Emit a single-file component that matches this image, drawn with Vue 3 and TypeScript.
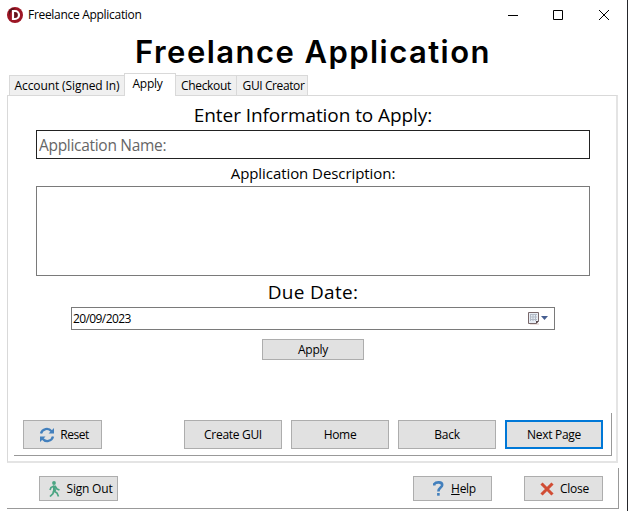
<script setup lang="ts">
import { ref } from 'vue'

const tabs = [
  { id: 'account', label: 'Account (Signed In)' },
  { id: 'apply', label: 'Apply' },
  { id: 'checkout', label: 'Checkout' },
  { id: 'creator', label: 'GUI Creator' },
]
const active = ref('apply')
const pages = ['Create GUI', 'Home', 'Back', 'Next Page']
const dueDate = ref('20/09/2023')
</script>

<template>
  <main class="window">
    <header class="titlebar">
      <svg class="logo" viewBox="0 0 16 16">
        <circle cx="8" cy="8" r="8" fill="#9c1524" />
        <path d="M2 4A7 7 0 0 1 8 1L6 3C4 4 2 7 2 10Z" fill="#50151b" />
        <path d="M6 4H8A4 4 0 0 1 8 12H6Z" fill="#65131c" stroke="#fff" stroke-width="2.200" />
      </svg>
      <span class="caption">Freelance Application</span>
      <svg class="controls" viewBox="0 0 102 12" fill="none" stroke="#000">
        <path d="M0 6.500H10M45.500 1.500H54.500V10.500H45.500Z" />
        <path d="M91 1L101 11M101 1L91 11" />
      </svg>
    </header>
    <h1>Freelance Application</h1>
    <nav class="tabs">
      <button v-for="t in tabs" :key="t.id" class="tab" :class="[t.id, { selected: active === t.id }]" @click="active = t.id">
        <span>{{ t.label }}</span>
      </button>
    </nav>
    <section class="panel">
      <h2>Enter Information to Apply:</h2>
      <input class="name" placeholder="Application Name:" />
      <h3>Application Description:</h3>
      <textarea class="description"></textarea>
      <h2 class="due">Due Date:</h2>
      <div class="date">
        <span>{{ dueDate }}</span>
        <svg viewBox="0 0 21 14">
          <rect x="2" y="11" width="9" height="2" fill="#eadfdc" />
          <path d="M.5.500H10.500V9L8 11.500H.5Z" fill="#e8edf4" stroke="#79686a" />
          <path d="M2 2.500H9M2 5H9M2 7.500H9M2.500 2V9M5 2V9M7.500 2V9" stroke="#b3bbc7" fill="none" />
          <path d="M8 12V9H11Z" fill="#59494c" />
          <path d="M13 4H20L16.500 8Z" fill="#465f91" />
        </svg>
      </div>
      <button class="btn apply">Apply</button>
      <div class="actions">
        <button class="btn reset">
          <svg viewBox="0 0 16 16" fill="none" stroke="#4380bd" stroke-width="2.300">
            <path d="M2 6.500C3.200 1.500 9.500.5 12.500 4.200M14 9.500C12.800 14.500 6.500 15.500 3.500 11.800" />
            <path d="M15 1V6.500H9.500ZM1 15V9.500H6.500Z" fill="#4380bd" stroke="none" />
          </svg>
          <span>Reset</span>
        </button>
        <div class="pages">
          <button v-for="p in pages" :key="p" class="btn page" :class="{ primary: p === 'Next Page' }">{{ p }}</button>
        </div>
      </div>
    </section>
    <footer class="footer">
      <button class="btn signout">
        <svg viewBox="0 0 12 16" fill="none" stroke="#4ba583" stroke-width="1.700">
          <circle cx="5" cy="2" r="1.900" fill="#4ba583" stroke="none" />
          <path d="M5.200 5L5 10L8 12L9.500 15.500M4.500 10L4 12.500L1 15.500M5 5L2 6.500L1 9M6 5L8 8L10.500 9" />
          <path d="M4 4.500H6.500L7 10H4Z" fill="#4ba583" stroke="none" />
        </svg>
        <span>Sign Out</span>
      </button>
      <button class="btn help">
        <svg viewBox="0 0 11 15" fill="none" stroke="#4380bd" stroke-width="2.600">
          <path d="M1.300 4.500V3C3 .8 9.200.5 9.200 4C9.200 6.700 5.400 6.500 5.400 10.500" />
          <path d="M5.400 12V14.700" />
        </svg>
        <span><u>H</u>elp</span>
      </button>
      <button class="btn close">
        <svg viewBox="0 0 14 14" stroke="#d14d35" stroke-width="3.100">
          <path d="M1.500 1.500L12.500 12.500M12.500 1.500L1.500 12.500" />
        </svg>
        <span>Close</span>
      </button>
    </footer>
  </main>
</template>

<style>
body {
  background: #fff;
}
</style>

<style scoped>
* {
  box-sizing: border-box;
}
.window {
  width: 628px;
  height: 511px;
  overflow: hidden;
  background: #fff;
  border-right: 1px solid #25272b;
  padding-left: 7px;
  color: #000;
  font: 12px/16px "Open Sans", "Noto Sans", sans-serif;
  letter-spacing: -0.3px;
}
button,
input,
textarea {
  font: inherit;
  letter-spacing: inherit;
  color: inherit;
  margin: 0;
  padding: 0;
  border-radius: 0;
  outline: none;
}
svg {
  display: block;
  flex: none;
}
.titlebar {
  display: flex;
  align-items: center;
  height: 29px;
}
.logo {
  width: 16px;
  height: 16px;
}
.caption {
  margin-left: 5px;
}
.controls {
  width: 102px;
  height: 12px;
  margin: 0 17px 0 auto;
}
h1 {
  margin: 0;
  height: 44px;
  width: 612px;
  text-align: center;
  font: 600 31px/46px Inter, sans-serif;
  letter-spacing: 1.45px;
}
.tabs {
  display: flex;
  align-items: flex-end;
  height: 23px;
  padding-left: 2px;
  margin-bottom: -1px;
}
.tab {
  height: 21px;
  border: 1px solid #d9d9d9;
  border-left: 0;
  background: #f0f0f0;
  white-space: nowrap;
}
.account {
  width: 115px;
  border-left: 1px solid #d9d9d9;
  border-right: 0;
  letter-spacing: -0.1px;
}
.checkout {
  width: 61px;
}
.creator {
  width: 71px;
  padding-left: 3px;
  letter-spacing: -0.4px;
}
.tab.selected {
  width: 52px;
  height: 23px;
  border: 1px solid #d9d9d9;
  border-bottom: 0;
  background: #fff;
  padding: 0 5px 2px 0;
}
.panel {
  width: 611px;
  height: 368px;
  border: 1px solid #d9d9d9;
  border-right: 2px solid #e4e4e4;
  border-bottom: 2px solid #e4e4e4;
  padding: 0 4px 5px 6px;
  display: flex;
  flex-direction: column;
}
h2,
h3 {
  margin: 0;
  width: 598px;
  text-align: center;
  font-weight: 400;
}
h2 {
  height: 34px;
  font-size: 19px;
  line-height: 38px;
  letter-spacing: -0.07px;
}
h3 {
  height: 27px;
  font-size: 15px;
  line-height: 29px;
  letter-spacing: -0.07px;
}
.name {
  width: 554px;
  height: 29px;
  margin-left: 22px;
  border: 1px solid #222;
  padding-left: 2px;
  font-size: 15.5px;
}
.name::placeholder {
  color: #666;
  opacity: 1;
}
.description {
  width: 554px;
  height: 90px;
  margin-left: 22px;
  border: 1px solid #7a7a7a;
  resize: none;
}
.due {
  height: 31px;
  line-height: 33px;
  letter-spacing: 0.3px;
}
.date {
  display: flex;
  align-items: center;
  justify-content: space-between;
  width: 484px;
  height: 23px;
  margin-left: 57px;
  border: 1px solid #7a7a7a;
  padding: 0 5px 0 1px;
  letter-spacing: -0.6px;
}
.date svg {
  width: 21px;
  height: 14px;
}
.btn {
  display: flex;
  align-items: center;
  justify-content: center;
  background: #e1e1e1;
  border: 1px solid #adadad;
  white-space: nowrap;
}
.apply.btn {
  width: 102px;
  height: 21px;
  margin: 9px 0 0 248px;
}
.actions {
  display: flex;
  justify-content: space-between;
  align-items: flex-start;
  width: 598px;
  height: 43px;
  margin-top: auto;
  padding: 7px 8px 0 9px;
  border: solid #999;
  border-width: 0 1px 1px 0;
}
.pages {
  display: flex;
  gap: 9px;
}
.page {
  width: 98px;
  height: 29px;
}
.primary {
  border: 2px solid #0078d7;
}
.reset {
  width: 79px;
  height: 29px;
  gap: 5px;
  padding-left: 3px;
  letter-spacing: -0.5px;
}
.reset svg {
  width: 16px;
  height: 16px;
}
.footer {
  display: flex;
  width: 612px;
  height: 41px;
  margin-top: 5px;
  padding: 8px 15px 0 32px;
  border: solid #999;
  border-width: 0 1px 1px 0;
}
.footer .btn {
  width: 79px;
  height: 25px;
}
.signout svg {
  width: 12px;
  height: 16px;
}
.signout {
  gap: 6px;
  padding-left: 4px;
  letter-spacing: -0.2px;
}
.help {
  margin-left: auto;
  gap: 7px;
  padding-left: 4px;
}
.help svg {
  width: 11px;
  height: 15px;
}
.close {
  margin-left: 32px;
  gap: 6px;
  padding-left: 2px;
}
.close svg {
  width: 14px;
  height: 14px;
}
</style>
